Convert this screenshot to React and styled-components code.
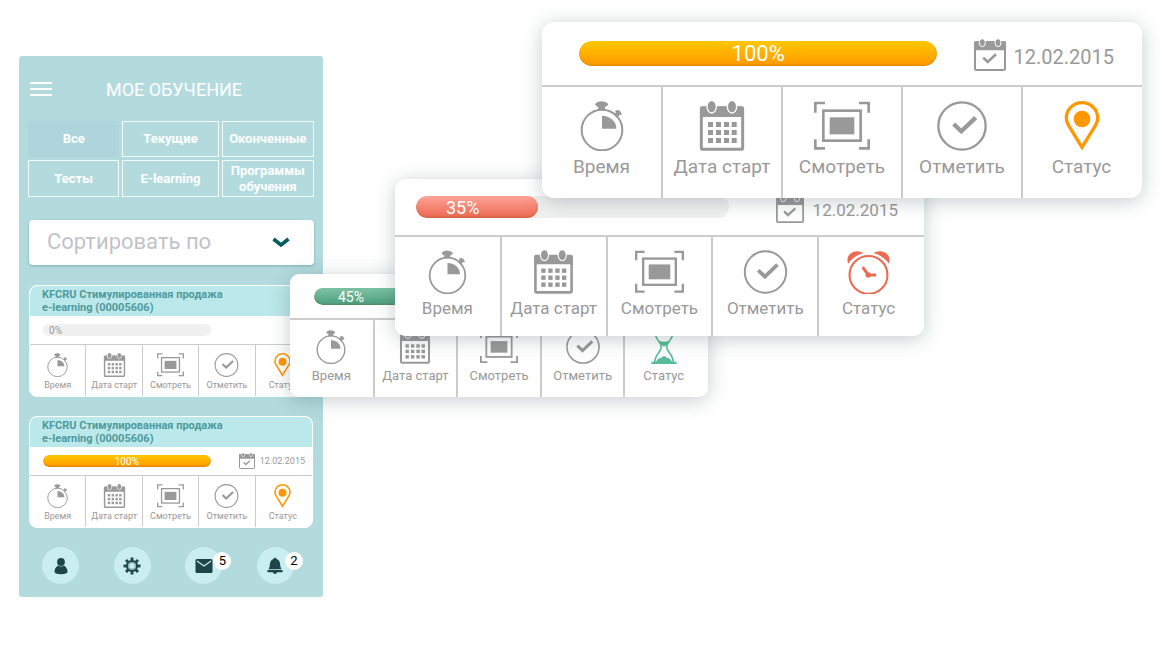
import React from "react";
import styled, { createGlobalStyle, css } from "styled-components";

const GlobalStyle = createGlobalStyle`
  *, *::before, *::after { box-sizing: border-box; }
  body { margin: 0; background: #fff; font-family: Roboto, "Liberation Sans", sans-serif; }
  button, select { font: inherit; }
`;

const GREY = "#999";
const LINE = "#ccc";

const SIZES = {
  xs: { radius: 8, headH: 28, line: 1, divL: 0, divR: 1, bodyH: 51, padL: 13, padR: 7, track: 64, barH: 12, barFont: 10, barPad: 6, iconW: 27, iconH: 24, top: 8, gap: 2, label: 9, labelH: 12, statusPad: 2, dateIcon: 16, dateFont: 9, dateGap: 5, dateTop: 0 },
  s: { radius: 9, headH: 44, line: 2, divL: 1, divR: 1, bodyH: 77, padL: 24, padR: 16, track: 65, barH: 17, barFont: 14, barPad: 24, iconW: 38, iconH: 34, top: 10, gap: 4, label: 13, labelH: 16, statusPad: 6, dateIcon: 22, dateFont: 14, dateGap: 6, dateTop: 2 },
  m: { radius: 11, headH: 56, line: 2, divL: 1, divR: 1, bodyH: 99, padL: 21, padR: 26, track: 65, barH: 22, barFont: 18, barPad: 30, iconW: 49, iconH: 44, top: 13, gap: 4, label: 17, labelH: 20, statusPad: 6, dateIcon: 28, dateFont: 17, dateGap: 9, dateTop: 3 },
  l: { radius: 12, headH: 63, line: 2, divL: 1, divR: 1, bodyH: 111, padL: 37, padR: 28, track: 67, barH: 25, barFont: 22, barPad: 40, iconW: 56, iconH: 50, top: 14, gap: 5, label: 19, labelH: 22, statusPad: 2, dateIcon: 32, dateFont: 20, dateGap: 8, dateTop: 3 },
};

/* ---------- icons ---------- */

const StopwatchIcon = () => (
  <svg viewBox="0 0 168 150" aria-hidden="true">
    <circle cx="84" cy="87" r="61" fill="none" stroke="currentColor" strokeWidth="6" />
    <path fill="currentColor" d="M63 10Q69 1 82 1Q96 1 103 10Q100 17 93 18Q92 22 96 28H70Q74 22 73 18Q66 17 63 10Z" />
    <path fill="currentColor" d="M123 30Q130 24 137 29Q144 35 143 43L137 41L130 51L119 41L126 34Z" />
    <path fill="currentColor" d="M84 44A43 39 0 0 1 127 83H84Z" />
  </svg>
);

const CalendarIcon = () => (
  <svg viewBox="0 0 168 150" aria-hidden="true">
    <rect x="22" y="21" width="124" height="124" rx="5" fill="none" stroke="currentColor" strokeWidth="9" />
    <path fill="currentColor" d="M18 22q0-6 6-6h120q6 0 6 6v26H18z" />
    {[53, 114].map((x) => (
      <ellipse key={x} cx={x} cy="17" rx="14" ry="19" fill="currentColor" stroke="#fff" strokeWidth="4" />
    ))}
    {[63, 87, 111].map((y) =>
      [42, 66, 90, 113].map((x) => <rect key={`${x}-${y}`} x={x} y={y} width="15" height="15" fill="currentColor" />)
    )}
  </svg>
);

const ScreenIcon = () => (
  <svg viewBox="0 0 168 150" aria-hidden="true">
    <g fill="none" stroke="currentColor" strokeWidth="8">
      <path d="M4 35V6H33M135 6H164V35M164 115V142H135M33 142H4V115" />
      <rect x="28" y="29" width="112" height="90" />
    </g>
    <rect x="47" y="49" width="74" height="51" fill="currentColor" />
  </svg>
);

const CheckIcon = () => (
  <svg viewBox="0 0 168 150" aria-hidden="true">
    <g fill="none" stroke="currentColor">
      <circle cx="84" cy="75" r="71" strokeWidth="7" />
      <path d="M59 69L82 91L125 50" strokeWidth="13" />
    </g>
  </svg>
);

const PinIcon = () => (
  <svg viewBox="0 0 168 150" aria-hidden="true">
    <path fill="none" stroke="currentColor" strokeWidth="10" d="M84 139L44 74Q37 63 37 51A47 46 0 0 1 131 51Q131 63 124 74Z" />
    <circle cx="84" cy="54" r="25" fill="currentColor" />
  </svg>
);

const AlarmIcon = () => (
  <svg viewBox="0 0 168 150" aria-hidden="true">
    <circle cx="84" cy="85" r="65" fill="none" stroke="currentColor" strokeWidth="7" />
    <path fill="currentColor" d="M14 47C7 27 17 5 44 4Q58 4 67 10Q33 19 14 47ZM154 47C161 27 151 5 124 4Q110 4 101 10Q135 19 154 47Z" />
    <path fill="none" stroke="currentColor" strokeWidth="10" strokeLinejoin="round" d="M64 58L83 85H110" />
    <circle cx="83" cy="85" r="9" fill="currentColor" />
  </svg>
);

const HourglassIcon = () => (
  <svg viewBox="0 0 168 150" aria-hidden="true">
    <path fill="currentColor" d="M28 0H140V9H28ZM28 140H140V150H28Z" />
    <path fill="none" stroke="currentColor" strokeWidth="7" d="M43 8C43 40 72 52 72 75S43 108 43 142M125 8C125 40 96 52 96 75S125 108 125 142" />
    <path fill="currentColor" d="M58 46Q84 58 110 46Q103 62 84 74Q65 62 58 46ZM46 141Q60 122 72 122L84 114L96 122Q108 122 122 141Z" />
  </svg>
);

const DateIcon = () => (
  <svg viewBox="0 0 96 96" aria-hidden="true">
    <rect x="3" y="9" width="90" height="84" rx="4" fill="none" stroke="currentColor" strokeWidth="6" />
    <path fill="currentColor" d="M0 12q0-6 6-6h84q6 0 6 6v22H0z" />
    {[25, 72].map((x) => (
      <ellipse key={x} cx={x} cy="11" rx="9" ry="12" fill="currentColor" stroke="#fff" strokeWidth="3" />
    ))}
    <path d="M28 56L41 69L66 46" fill="none" stroke="currentColor" strokeWidth="8" />
  </svg>
);

const ChevronIcon = () => (
  <svg viewBox="0 0 18 11" width="18" height="11" aria-hidden="true">
    <path d="M1.500 2L9 8L16.500 2" fill="none" stroke="#035e63" strokeWidth="3.600" />
  </svg>
);

const UserIcon = () => (
  <svg viewBox="0 0 16 18" width="16" height="18" aria-hidden="true">
    <circle cx="8" cy="5" r="3.900" fill="currentColor" />
    <path fill="currentColor" d="M5 8.400Q8 10.400 11 8.400Q14.500 11 14.500 14.500Q14.500 17.200 8 17.200T1.500 14.500Q1.500 11 5 8.400Z" />
  </svg>
);

const GearIcon = () => (
  <svg viewBox="-9 -9 18 18" width="18" height="18" aria-hidden="true">
    <circle r="5.100" fill="none" stroke="currentColor" strokeWidth="2" />
    {[0, 45, 90, 135, 180, 225, 270, 315].map((a) => (
      <rect key={a} x="-1.400" y="-8.500" width="2.800" height="3.200" fill="currentColor" transform={`rotate(${a})`} />
    ))}
    <circle r="3.400" fill="none" stroke="currentColor" strokeWidth="0.500" />
  </svg>
);

const MailIcon = () => (
  <svg viewBox="0 0 18 16" width="18" height="16" aria-hidden="true">
    <rect x="0.500" y="1" width="17" height="14" rx="1.500" fill="currentColor" />
    <path d="M2 3L9 8L16 3" fill="none" stroke="#c9edf1" strokeWidth="1.200" />
  </svg>
);

const BellIcon = () => (
  <svg viewBox="0 0 18 18" width="18" height="18" aria-hidden="true">
    <path fill="currentColor" d="M9 .8q1.300 0 1.500 1.200Q14 3 14.200 8Q14.300 10.500 15.500 12.200H2.500Q3.700 10.500 3.800 8Q4 3 7.500 2Q7.700.8 9 .8ZM1.500 13H16.500V15.300H11.200Q10.700 17 9 17T6.800 15.300H1.500Z" />
  </svg>
);

/* ---------- course card ---------- */

const Card = styled.article`
  background: #fff;
  border-radius: ${(p) => p.$s.radius}px;
  overflow: hidden;
`;

const CardHead = styled.div`
  display: flex;
  align-items: center;
  justify-content: space-between;
  height: ${(p) => p.$s.headH}px;
  padding: 0 ${(p) => p.$s.padR}px 0 ${(p) => p.$s.padL}px;
`;

const Track = styled.div`
  flex: none;
  width: ${(p) => p.$s.track}%;
  height: ${(p) => p.$s.barH}px;
  border-radius: ${(p) => p.$s.barH}px;
  background: #f0f0f0;
  overflow: hidden;
`;

const tones = {
  none: css`background: transparent; color: ${GREY};`,
  orange: css`background: linear-gradient(#ffc800, #ff9800);`,
  red: css`background: linear-gradient(#ffa396, #ea6850);`,
  green: css`background: linear-gradient(#7dc3a4, #4c9e7e);`,
};

const Fill = styled.div`
  display: flex;
  align-items: center;
  justify-content: ${(p) => (p.$full ? "center" : "flex-start")};
  height: 100%;
  padding: 1px 0 0 ${(p) => (p.$full ? 0 : p.$s.barPad)}px;
  border-radius: inherit;
  color: #fff;
  font-size: ${(p) => p.$s.barFont}px;
  line-height: 1;
  box-shadow: ${(p) => (p.$tone === "none" ? "none" : "inset 0 -1px 2px rgba(120, 60, 0, 0.25)")};
  ${(p) => tones[p.$tone]}
`;

const DateMark = styled.div`
  display: flex;
  align-items: center;
  gap: ${(p) => p.$s.dateGap}px;
  padding-top: ${(p) => p.$s.dateTop}px;
  color: ${GREY};
  font-size: ${(p) => p.$s.dateFont}px;
  svg { display: block; width: ${(p) => p.$s.dateIcon}px; height: ${(p) => p.$s.dateIcon}px; }
  time { padding-top: ${(p) => p.$s.dateTop}px; }
`;

const Actions = styled.div`
  display: grid;
  grid-template-columns: repeat(5, 1fr);
  border-top: ${(p) => p.$s.line}px solid ${LINE};
`;

const Action = styled.button`
  display: flex;
  flex-direction: column;
  align-items: center;
  gap: ${(p) => p.$s.gap}px;
  min-width: 0;
  height: ${(p) => p.$s.bodyH}px;
  padding: ${(p) => p.$s.top}px ${(p) => (p.$accent ? p.$s.statusPad : 0)}px 0 0;
  border: solid ${LINE};
  border-width: 0 ${(p) => p.$s.divR}px 0 ${(p) => p.$s.divL}px;
  background: none;
  color: ${GREY};
  font-size: ${(p) => p.$s.label}px;
  line-height: ${(p) => p.$s.labelH}px;
  white-space: nowrap;
  cursor: pointer;
  &:first-child { border-left-width: 0; }
  &:last-child { border-right-width: 0; }
  svg {
    display: block;
    flex: none;
    width: ${(p) => p.$s.iconW}px;
    height: ${(p) => p.$s.iconH}px;
    color: ${(p) => p.$accent || GREY};
  }
`;

const STATUS = {
  pin: { Icon: PinIcon, color: "#ff9800" },
  alarm: { Icon: AlarmIcon, color: "#ec6a52" },
  hourglass: { Icon: HourglassIcon, color: "#56bd98" },
};

const ACTIONS = [
  ["Время", StopwatchIcon],
  ["Дата старт", CalendarIcon],
  ["Смотреть", ScreenIcon],
  ["Отметить", CheckIcon],
];

function CourseContent({ size, value, fill, tone, date, status }) {
  const s = SIZES[size];
  const { Icon: StatusIcon, color } = STATUS[status];
  return (
    <>
      <CardHead $s={s}>
        <Track $s={s} role="progressbar" aria-label="Прогресс" aria-valuenow={value} aria-valuemin={0} aria-valuemax={100}>
          <Fill $s={s} $tone={tone} $full={value === 100} style={{ width: `${fill}%` }}>{value}%</Fill>
        </Track>
        {date && <DateMark $s={s}><DateIcon /><time>{date}</time></DateMark>}
      </CardHead>
      <Actions $s={s}>
        {ACTIONS.map(([label, Icon]) => (
          <Action key={label} type="button" $s={s}><Icon />{label}</Action>
        ))}
        <Action type="button" $s={s} $accent={color}><StatusIcon />Статус</Action>
      </Actions>
    </>
  );
}

/* ---------- phone ---------- */

const Stage = styled.main`
  position: relative;
  min-width: 1100px;
  padding: 56px 19px 52px;
`;

const Phone = styled.section`
  width: 304px;
  padding: 0 9px 13px;
  border-radius: 3px;
  background: #b3dbde;
`;

const PhoneHeader = styled.header`
  display: grid;
  grid-template-columns: 24px 1fr 18px;
  align-items: center;
  height: 65px;
  padding: 0 2px;
`;

const MenuButton = styled.button`
  display: flex;
  flex-direction: column;
  gap: 4px;
  width: 22px;
  padding: 0;
  border: 0;
  background: none;
  span { height: 2px; background: #fff; }
`;

const PhoneTitle = styled.h1`
  margin: 0;
  padding-top: 2px;
  color: #fff;
  font-size: 18px;
  font-weight: 400;
  line-height: 24px;
  text-align: center;
  white-space: nowrap;
`;

const Tabs = styled.nav`
  display: grid;
  grid-template-columns: 92fr 97fr 93fr;
  grid-template-rows: 36px 37px;
  gap: 3px;
`;

const Tab = styled.button`
  padding: 0;
  border: 1px solid ${(p) => (p.$active ? "transparent" : "#f2fafa")};
  background: ${(p) => (p.$active ? "#add5db" : "transparent")};
  color: #fff;
  font-size: 13px;
  font-weight: 700;
  line-height: 16px;
`;

const SortField = styled.label`
  display: grid;
  grid-template-columns: 1fr 42px;
  align-items: center;
  margin: 23px 0 20px 1px;
  border-radius: 4px;
  background: #fff;
  box-shadow: 0 1px 3px rgba(40, 90, 95, 0.35);
`;

const SortSelect = styled.select`
  width: 100%;
  height: 45px;
  padding: 0 18px 2px;
  border: 0;
  background: transparent;
  color: #bfc4c7;
  font-size: 22px;
  appearance: none;
`;

const PhoneCard = styled(Card)`
  margin: 0 1px 19px;
  border: 1px solid #fff;
`;

const CourseTitle = styled.h2`
  height: 30px;
  margin: 0;
  padding: 2px 12px;
  border-radius: 7px 7px 0 0;
  background: #bbe8ea;
  color: #4f9a9d;
  font-size: 11px;
  font-weight: 700;
  line-height: 13px;
`;

const BottomNav = styled.nav`
  display: flex;
  justify-content: space-between;
  padding: 0 20px 0 14px;
`;

const NavButton = styled.button`
  position: relative;
  display: grid;
  place-items: center;
  width: 37px;
  height: 37px;
  padding: 0;
  border: 0;
  border-radius: 50%;
  background: #c9edf1;
  color: #1f4549;
`;

const Badge = styled.span`
  position: absolute;
  top: 5px;
  left: 28px;
  width: 18px;
  height: 18px;
  border-radius: 50%;
  background: #fff;
  color: #000;
  font-size: 13px;
  line-height: 17px;
  text-align: center;
`;

/* Enlarged cards stacked over the phone, each one above the previous. */
const FloatingCard = styled(Card)`
  position: absolute;
  top: ${(p) => p.$top}px;
  left: ${(p) => p.$left}px;
  right: ${(p) => p.$right}px;
  box-shadow: 0 3px 20px rgba(50, 75, 75, 0.28);
`;

const TABS = ["Все", "Текущие", "Оконченные", "Тесты", "E-learning", "Программы обучения"];

const NAV = [
  { name: "Профиль", Icon: UserIcon },
  { name: "Настройки", Icon: GearIcon },
  { name: "Сообщения", Icon: MailIcon, count: 5 },
  { name: "Уведомления", Icon: BellIcon, count: 2 },
];

const COURSES = [
  { id: 1, value: 0, fill: 100, tone: "none" },
  { id: 2, value: 100, fill: 100, tone: "orange", date: "12.02.2015" },
];

export default function App() {
  return (
    <>
      <GlobalStyle />
      <Stage>
        <Phone>
          <PhoneHeader>
            <MenuButton type="button" aria-label="Меню"><span /><span /><span /></MenuButton>
            <PhoneTitle>МОЕ ОБУЧЕНИЕ</PhoneTitle>
          </PhoneHeader>
          <Tabs>
            {TABS.map((t, i) => <Tab key={t} type="button" $active={i === 0}>{t}</Tab>)}
          </Tabs>
          <SortField>
            <SortSelect aria-label="Сортировать по"><option>Сортировать по</option></SortSelect>
            <ChevronIcon />
          </SortField>
          {COURSES.map(({ id, ...course }) => (
            <PhoneCard key={id} $s={SIZES.xs}>
              <CourseTitle>KFCRU Стимулированная продажа<br />e-learning (00005606)</CourseTitle>
              <CourseContent size="xs" status="pin" {...course} />
            </PhoneCard>
          ))}
          <BottomNav>
            {NAV.map(({ name, Icon, count }) => (
              <NavButton key={name} type="button" aria-label={name}>
                <Icon />
                {count && <Badge>{count}</Badge>}
              </NavButton>
            ))}
          </BottomNav>
        </Phone>
        <FloatingCard $s={SIZES.s} $top={274} $left={290} $right={454}>
          <CourseContent size="s" value={45} fill={45} tone="green" status="hourglass" />
        </FloatingCard>
        <FloatingCard $s={SIZES.m} $top={179} $left={395} $right={238}>
          <CourseContent size="m" value={35} fill={39} tone="red" date="12.02.2015" status="alarm" />
        </FloatingCard>
        <FloatingCard $s={SIZES.l} $top={22} $left={542} $right={20}>
          <CourseContent size="l" value={100} fill={100} tone="orange" date="12.02.2015" status="pin" />
        </FloatingCard>
      </Stage>
    </>
  );
}
